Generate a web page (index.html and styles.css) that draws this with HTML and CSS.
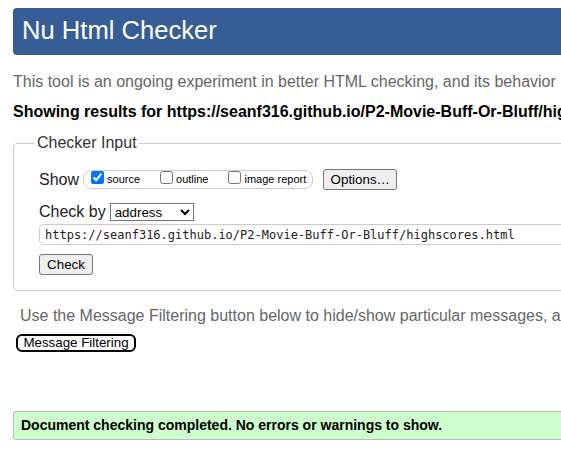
FILE: index.html
```html
<!DOCTYPE html>
<html lang="en">
<head>
<meta charset="utf-8">
<title>Nu Html Checker</title>
<link rel="stylesheet" href="styles.css">
</head>
<body>
<div class="page">
  <h1 class="title">Nu Html Checker</h1>
  <p class="intro">This tool is an ongoing experiment in better HTML checking, and its behavior remains subject to change</p>
  <p class="showing">Showing results for https://seanf316.github.io/P2-Movie-Buff-Or-Bluff/highscores.html</p>
  <form class="checker">
    <fieldset class="fs">
      <legend class="legend">Checker Input</legend>
      <div class="row row-show">
        <span class="label">Show</span>
        <span class="opts">
          <label class="opt"><input class="cb" type="checkbox" checked>source</label>
          <label class="opt"><input class="cb" type="checkbox">outline</label>
          <label class="opt last"><input class="cb" type="checkbox">image report</label>
        </span>
        <button type="button" class="btn btn-options">Options…</button>
      </div>
      <div class="row row-by">
        <span class="label">Check by</span>
        <select class="sel">
          <option>address</option>
          <option>file upload</option>
          <option>text input</option>
        </select>
      </div>
      <input class="url" type="url" value="https://seanf316.github.io/P2-Movie-Buff-Or-Bluff/highscores.html">
      <div class="row row-check">
        <button type="button" class="btn btn-check">Check</button>
      </div>
    </fieldset>
  </form>
  <p class="note">Use the Message Filtering button below to hide/show particular messages, and to see total counts of errors and warnings.</p>
  <button type="button" class="filter-btn">Message Filtering</button>
  <p class="success">Document checking completed. No errors or warnings to show.</p>
</div>
</body>
</html>
```

FILE: styles.css
```css
html, body {
  margin: 0;
  padding: 0;
  overflow: hidden;
  background: #fff;
}
body {
  font-family: "Liberation Sans", Arial, sans-serif;
  color: #000;
}
.page {
  width: 1000px;
  padding: 8px 0 0 13px;
}
.title {
  margin: 0;
  height: 47px;
  box-sizing: border-box;
  padding: 9px 9px 11px;
  font-size: 25.6px;
  line-height: 27px;
  font-weight: normal;
  color: #fff;
  background: #365d95;
  border-radius: 4px;
}
.intro {
  margin: 18px 0 0;
  font-size: 16px;
  line-height: 18px;
  color: #666;
  white-space: nowrap;
}
.showing {
  margin: 12px 0 0;
  font-size: 16px;
  line-height: 18px;
  font-weight: bold;
  color: #000;
  white-space: nowrap;
}
.checker {
  margin: 13px 0 0;
}
.fs {
  margin: 0;
  padding: 17px 0 15px 25px;
  border: 1px solid #ccc;
  border-radius: 4px;
  min-width: 0;
}
.legend {
  padding: 0 2px;
  margin-left: -4px;
  font-size: 16px;
  line-height: 18px;
  color: #333;
}
.row {
  display: flex;
  align-items: center;
  gap: 4px;
}
.row-show {
  height: 21px;
}
.label {
  font-size: 16px;
  line-height: 18px;
  color: #222;
  white-space: nowrap;
}
.opts {
  display: flex;
  align-items: center;
  height: 19px;
  box-sizing: border-box;
  padding: 0 6px 0 3px;
  border: 1px solid #ccc;
  border-radius: 8px;
}
.opt {
  display: flex;
  align-items: center;
  font-size: 11px;
  line-height: 13px;
  color: #000;
  margin-right: 16px;
  white-space: nowrap;
}
.opt.last {
  margin-right: 0;
}
.cb {
  width: 13px;
  height: 13px;
  margin: 0 3px 4px 4px;
}
.btn {
  height: 21px;
  box-sizing: border-box;
  padding: 0;
  font-family: "Liberation Sans", Arial, sans-serif;
  font-size: 13.333px;
  color: #000;
  background: #efefef;
  border: 1px solid #767676;
  border-radius: 3px;
}
.btn-options {
  width: 74px;
  margin-left: 6px;
}
.btn-check {
  width: 54px;
}
.row-by {
  margin-top: 13px;
  height: 18px;
}
.sel {
  width: 84px;
  height: 18px;
  box-sizing: border-box;
  font-family: "Liberation Sans", Arial, sans-serif;
  font-size: 13.333px;
  color: #000;
  background: #fff;
  border: 1px solid #767676;
  border-radius: 0;
}
.url {
  display: block;
  margin: 3px 0 0;
  width: 800px;
  height: 21px;
  box-sizing: border-box;
  padding: 0 5px;
  font-family: "DejaVu Sans Mono", "Liberation Mono", monospace;
  font-size: 12px;
  color: #222;
  background: #fff;
  border: 1px solid #ccc;
  border-radius: 5px;
}
.row-check {
  margin-top: 9px;
}
.note {
  margin: 16px 0 0 7px;
  font-size: 16px;
  line-height: 18px;
  color: #666;
  white-space: nowrap;
}
.filter-btn {
  display: block;
  margin: 9px 0 0 3px;
  width: 120px;
  height: 18px;
  box-sizing: border-box;
  padding: 0;
  font-family: "Liberation Sans", Arial, sans-serif;
  font-size: 13.333px;
  line-height: 14px;
  color: #000;
  background: #fff;
  border: 2px solid #000;
  border-radius: 6px;
}
.success {
  margin: 59px 0 0;
  padding: 5px 7px 6px;
  font-size: 14px;
  line-height: 16px;
  font-weight: bold;
  color: #000;
  background: #ccffcc;
  border: 1px solid #bbb;
  border-radius: 3px;
  white-space: nowrap;
}
```
